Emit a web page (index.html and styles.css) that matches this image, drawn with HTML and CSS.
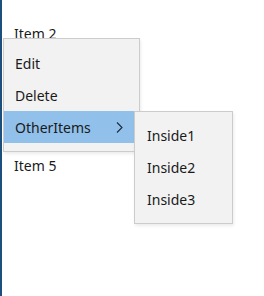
FILE: index.html
```html
<!DOCTYPE html>
<html lang="en">
<head>
  <meta charset="UTF-8" />
  <title>Context Menu</title>
  <link rel="stylesheet" href="styles.css">
</head>
<body>
  <div class="window">
    <ul class="item-list">
      <li>Item 2</li>
      <li class="below-menu">Item 5</li>
    </ul>

    <div class="menu context-menu">
      <div class="menu-item">Edit</div>
      <div class="menu-item">Delete</div>
      <div class="menu-item active">
        <span>OtherItems</span>
        <svg class="chevron" width="7" height="11" viewBox="0 0 7 11">
          <path d="M1 0.5 L6 5.5 L1 10.5" fill="none" stroke="#1b2a3a" stroke-width="1.1"/>
        </svg>
      </div>
    </div>

    <div class="menu sub-menu">
      <div class="menu-item">Inside1</div>
      <div class="menu-item">Inside2</div>
      <div class="menu-item">Inside3</div>
    </div>
  </div>
</body>
</html>
```

FILE: styles.css
```css
* {
  margin: 0;
  padding: 0;
  box-sizing: border-box;
  font-family: "Noto Sans", "Open Sans", sans-serif;
}
body {
  background: #fff;
  color: #1a1a1a;
  font-size: 14px;
}
.window {
  position: relative;
  height: 296px;
  border-left: 2px solid #1d4f7e;
}
.item-list {
  list-style: none;
  padding-top: 12px;
}
.item-list li {
  height: 44px;
  line-height: 44px;
  padding-left: 12px;
}
.item-list .below-menu {
  margin-top: 88px;
}
.menu {
  position: absolute;
  background: #f2f2f2;
  border: 1px solid #cccccc;
  box-shadow: 1px 2px 3px rgba(0, 0, 0, 0.08);
}
.context-menu {
  left: 1px;
  top: 38px;
  width: 137px;
  padding: 8px 0 8px 0;
}
.sub-menu {
  left: 132px;
  top: 111px;
  width: 99px;
  padding: 7px 0 8px 0;
}
.menu-item {
  height: 32px;
  display: flex;
  align-items: center;
  justify-content: space-between;
  padding-left: 11px;
}
.sub-menu .menu-item {
  padding-left: 12px;
}
.menu-item.active {
  background: #91c1ea;
}
.chevron {
  margin-right: 16px;
}
```
